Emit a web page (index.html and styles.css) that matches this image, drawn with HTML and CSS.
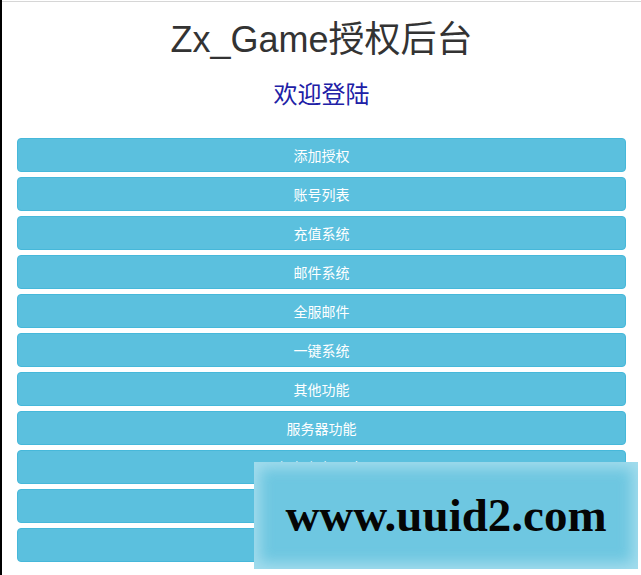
FILE: index.html
```html
<!DOCTYPE html>
<html lang="zh-CN">
<head>
<meta charset="utf-8">
<title>Zx_Game授权后台</title>
<link rel="stylesheet" href="styles.css">
</head>
<body>
<div class="topline"></div>
<div class="container">
  <h1 class="title">Zx_Game授权后台</h1>
  <h3 class="welcome">欢迎登陆</h3>
  <div class="menu">
    <a class="btn" href="#">添加授权</a>
    <a class="btn" href="#">账号列表</a>
    <a class="btn" href="#">充值系统</a>
    <a class="btn" href="#">邮件系统</a>
    <a class="btn" href="#">全服邮件</a>
    <a class="btn" href="#">一键系统</a>
    <a class="btn" href="#">其他功能</a>
    <a class="btn" href="#">服务器功能</a>
    <a class="btn" href="#">添加超级用户</a>
    <a class="btn" href="#"></a>
    <a class="btn" href="#"></a>
  </div>
</div>
<div class="watermark">www.uuid2.com</div>
</body>
</html>
```
FILE: styles.css
```css
html, body {
  margin: 0;
  padding: 0;
  background: #fff;
}
body {
  border-left: 2px solid #000;
  min-height: 575px;
  box-sizing: border-box;
  font-family: "Liberation Sans", "Noto Sans CJK SC", sans-serif;
  color: #333;
  position: relative;
}
.topline {
  height: 1px;
  margin-top: 1px;
  background: #d6d6d6;
}
.container {
  padding: 0 15px;
}
.title {
  font-family: "Liberation Sans", "Noto Sans CJK SC", sans-serif;
  font-size: 36px;
  font-weight: normal;
  line-height: 1.1;
  color: #333;
  text-align: center;
  margin: 18px 0 10px;
}
.welcome {
  font-family: "Noto Sans CJK SC", sans-serif;
  font-size: 24px;
  font-weight: normal;
  line-height: 1.1;
  color: #2020a6;
  text-align: center;
  margin: 20px 0 10px;
}
.menu {
  display: flex;
  flex-direction: column;
  gap: 5px;
  margin-top: 32px;
}
.btn {
  display: block;
  box-sizing: border-box;
  height: 34px;
  padding: 6px 12px;
  line-height: 20px;
  font-size: 14px;
  font-family: "Noto Sans CJK SC", sans-serif;
  color: #fff;
  text-align: center;
  text-decoration: none;
  background: #5bc0de;
  border: 1px solid #46b8da;
  border-radius: 4px;
}
.watermark {
  position: absolute;
  left: 252px;
  top: 462px;
  width: 384px;
  height: 107px;
  background: #6ec7e1;
  box-shadow: inset 0 0 14px 6px rgba(200, 235, 245, 0.6);
  font-family: "Liberation Serif", serif;
  font-weight: bold;
  font-size: 47px;
  color: #050505;
  text-align: center;
  line-height: 107px;
}
```
